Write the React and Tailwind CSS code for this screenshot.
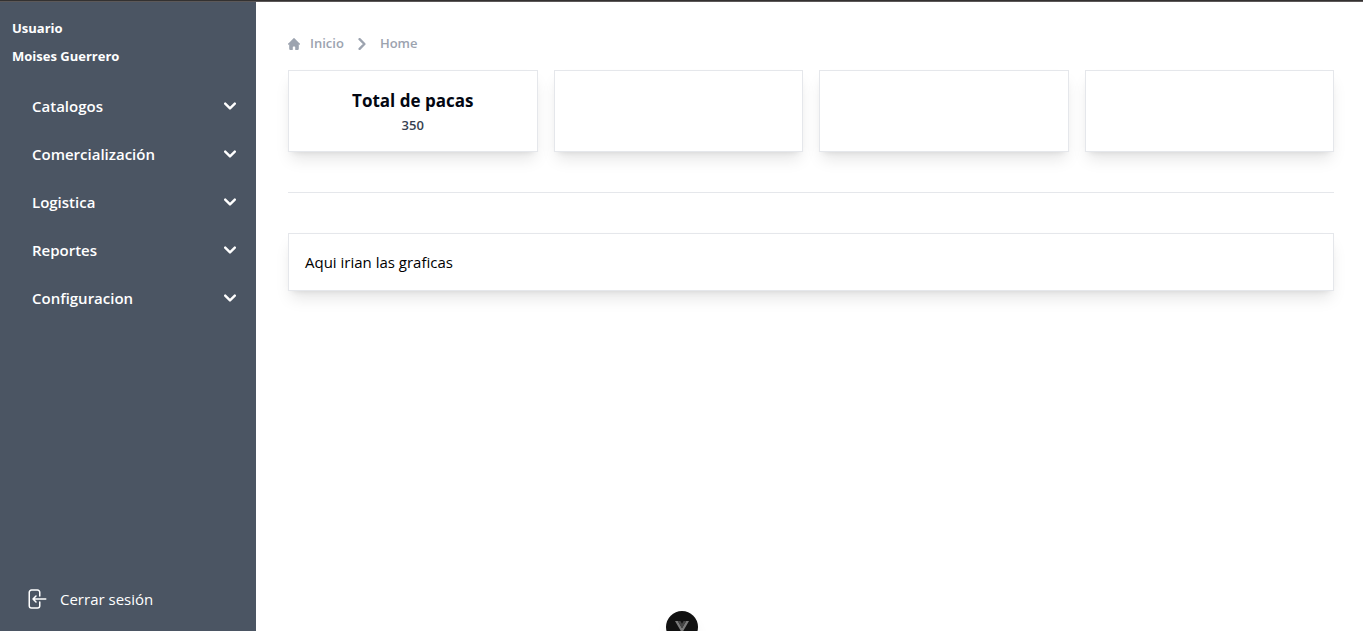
import React from "react";

const menu = ["Catalogos", "Comercialización", "Logistica", "Reportes", "Configuracion"];

function Card({ className = "", children }) {
  return (
    <section className={`border border-[#e5e7eb] bg-white shadow-lg ${className}`}>
      {children}
    </section>
  );
}

function Sidebar() {
  return (
    <aside className="flex w-64 shrink-0 flex-col bg-[#4b5563] text-white">
      <div className="px-3 pt-3 text-[13px] font-bold">
        <p className="leading-7">Usuario</p>
        <p className="leading-7">Moises Guerrero</p>
      </div>
      <nav className="mt-4 flex flex-col gap-2 px-3">
        {menu.map((label) => (
          <button
            key={label}
            type="button"
            className="flex h-10 w-full items-center justify-between pr-2 pl-5 text-[15px] font-semibold"
          >
            <span>{label}</span>
            <svg className="size-3" viewBox="0 0 10 6" fill="none" aria-hidden="true">
              <path
                d="m1 1 4 4 4-4"
                stroke="currentColor"
                strokeWidth="2"
                strokeLinecap="round"
                strokeLinejoin="round"
              />
            </svg>
          </button>
        ))}
      </nav>
      <button type="button" className="mt-auto mb-5 flex items-center gap-3 pl-6 text-[15px]">
        <svg
          className="size-6"
          viewBox="0 0 24 24"
          fill="none"
          stroke="currentColor"
          strokeWidth="1.5"
          strokeLinecap="round"
          strokeLinejoin="round"
          aria-hidden="true"
        >
          <path d="M15.75 9V5.25A2.25 2.25 0 0 0 13.5 3h-6a2.25 2.25 0 0 0-2.25 2.25v13.5A2.25 2.25 0 0 0 7.5 21h6a2.25 2.25 0 0 0 2.25-2.25V15M12 9l-3 3m0 0 3 3m-3-3h12.75" />
        </svg>
        <span>Cerrar sesión</span>
      </button>
    </aside>
  );
}

function Breadcrumb() {
  return (
    <nav aria-label="Breadcrumb" className="flex h-5 items-center text-[13px] font-semibold text-[#9ca3af]">
      <a href="#inicio" className="flex items-center gap-2.5">
        <svg className="size-3" viewBox="0 0 20 20" fill="currentColor" aria-hidden="true">
          <path d="m19.707 9.293-2-2-7-7a1 1 0 0 0-1.414 0l-7 7-2 2a1 1 0 0 0 1.414 1.414L2 10.414V18a2 2 0 0 0 2 2h3a1 1 0 0 0 1-1v-4a1 1 0 0 1 1-1h2a1 1 0 0 1 1 1v4a1 1 0 0 0 1 1h3a2 2 0 0 0 2-2v-7.586l.293.293a1 1 0 0 0 1.414-1.414Z" />
        </svg>
        Inicio
      </a>
      <svg className="mx-3 size-3" viewBox="0 0 6 10" fill="none" aria-hidden="true">
        <path
          d="m1 9 4-4-4-4"
          stroke="currentColor"
          strokeWidth="2"
          strokeLinecap="round"
          strokeLinejoin="round"
        />
      </svg>
      <a href="#home">Home</a>
    </nav>
  );
}

export default function App() {
  return (
    <div className="flex h-screen flex-col overflow-hidden border-t border-[#333131] bg-white font-['Open_Sans','Noto_Sans',sans-serif] text-black">
      <div className="flex min-h-0 flex-1 border-t border-[#5c5858]">
        <Sidebar />
        <main className="min-w-0 flex-1 pt-8 pr-[29px] pl-8">
          <Breadcrumb />
          <div className="mt-4 grid grid-cols-4 gap-4">
            <Card className="p-4 text-center">
              <h2 className="text-[17px] leading-7 font-bold text-[#030712]">Total de pacas</h2>
              <p className="text-[13px] leading-5 font-semibold text-[#374151]">350</p>
            </Card>
            <Card />
            <Card />
            <Card />
          </div>
          <hr className="my-10 border-[#e5e7eb]" />
          <Card className="p-4">
            <p className="text-[15px] leading-6">Aqui irian las graficas</p>
          </Card>
        </main>
      </div>
      <button
        type="button"
        aria-label="Vue"
        className="fixed -bottom-3 left-1/2 flex size-8 -translate-x-1/2 items-center justify-center rounded-full bg-[#111111] shadow-lg"
      >
        <svg className="size-3.5" viewBox="0 0 256 221" aria-hidden="true">
          <path d="m0 0l128 220.8L256 0h-51.2L128 132.48L50.56 0z" fill="#7a7a7a" />
          <path d="M50.56 0L128 133.12L204.8 0h-47.36L128 51.2L97.92 0z" fill="#454545" />
        </svg>
      </button>
    </div>
  );
}
